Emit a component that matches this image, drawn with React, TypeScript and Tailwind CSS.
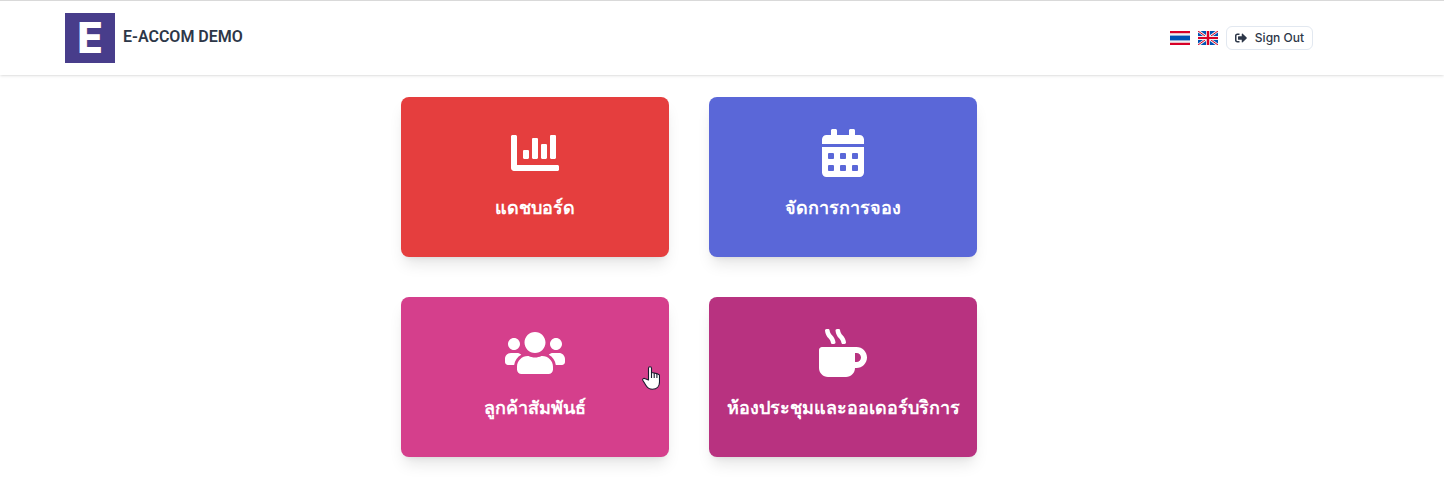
import type { ReactNode } from "react";
import { FaCalendarAlt, FaChartBar, FaMugHot, FaSignOutAlt, FaUsers } from "react-icons/fa";

type Tile = { label: string; color: string; icon: ReactNode };

const tiles: Tile[] = [
  { label: "แดชบอร์ด", color: "bg-[#e53e3e]", icon: <FaChartBar className="h-12 w-12" aria-hidden /> },
  { label: "จัดการการจอง", color: "bg-[#5a67d8]", icon: <FaCalendarAlt className="h-12 w-12" aria-hidden /> },
  { label: "ลูกค้าสัมพันธ์", color: "bg-[#d53f8c]", icon: <FaUsers className="h-12 w-15" aria-hidden /> },
  { label: "ห้องประชุมและออเดอร์บริการ", color: "bg-[#b83280]", icon: <FaMugHot className="h-12 w-12" aria-hidden /> },
];

function ThaiFlag() {
  return (
    <svg viewBox="0 0 20 14" className="h-3.5 w-5" aria-hidden>
      <path fill="#d80027" d="M0 0h20v14H0z" />
      <path fill="#f0f0f0" d="M0 2.200h20v9.600H0z" />
      <path fill="#0052b4" d="M0 4.600h20v4.800H0z" />
    </svg>
  );
}

function BritishFlag() {
  return (
    <svg viewBox="0 0 20 14" className="h-3.5 w-5" aria-hidden>
      <path fill="#f0f0f0" d="M0 0h20v14H0z" />
      <path fill="#0052b4" d="M2.500 0H8v4zM12 0h5.500L12 4zM20 1.500V5h-5zM20 9v3.500L15 9zM17.500 14H12v-4zM8 14H2.500L8 10zM0 12.500V9h5zM0 5V1.500L5 5z" />
      <path stroke="#d80027" strokeWidth="1" d="M0 0l7 5M20 0l-7 5M0 14l7-5M20 14l-7-5" />
      <path fill="#f0f0f0" d="M8 0h4v14H8zM0 5h20v4H0z" />
      <path fill="#d80027" d="M8.800 0h2.400v14H8.800zM0 5.900h20v2.200H0z" />
    </svg>
  );
}

function Pointer() {
  return (
    <svg viewBox="0 0 18 24" className="pointer-events-none absolute right-[9px] bottom-[67px] h-6 w-[18px]" aria-hidden>
      <path
        d="M6.500 14V2.200C6.500.2 9.500.2 9.500 2.200V6.500l2.700.5 2.600.6 1.900.8c.5.3.8.8.8 1.400V16c0 4-2.500 7.300-7 7.300-3 0-5-1.300-6.500-3.800L.9 14.500c-.9-1.700 1-2.800 2.400-1.700z"
        fill="#fff"
        stroke="#1a1a2e"
        strokeWidth="1.100"
        strokeLinejoin="round"
      />
      <path d="M9.500 6v6M12.200 7v5M14.900 7.800V12" stroke="#1a1a2e" strokeWidth="1.100" />
    </svg>
  );
}

export default function App() {
  return (
    <div className="bg-white font-['Inter','Noto_Sans',sans-serif] text-[#2d3748]">
      <header className="border-t border-[#d9d9d9] bg-white pr-[66px] shadow">
        <div className="mx-auto flex max-w-7xl items-center justify-between px-4 py-3">
          <a href="#" className="flex items-center gap-2">
            <span className="flex size-[50px] items-center justify-center bg-[#483d8b] text-[42px] leading-none font-extrabold text-white">
              E
            </span>
            <span className="pb-0.5 font-['Roboto',sans-serif] text-base font-semibold">E-ACCOM DEMO</span>
          </a>
          <div className="flex items-center gap-2">
            <button type="button" aria-label="ไทย"><ThaiFlag /></button>
            <button type="button" aria-label="English"><BritishFlag /></button>
            <button
              type="button"
              className="flex items-center gap-2 rounded-md border border-[#e2e8f0] px-2 py-[3px] text-xs font-medium"
            >
              <FaSignOutAlt aria-hidden />
              Sign Out
            </button>
          </div>
        </div>
      </header>
      <main className="pr-[66px] pb-7">
        <div className="mx-auto grid max-w-xl grid-cols-2 gap-10 pt-[22px]">
          {tiles.map((tile, index) => (
            <a
              key={tile.label}
              href="#"
              className={`relative flex h-40 flex-col items-center gap-4 rounded-lg pt-8 text-[18px] leading-[30px] font-bold whitespace-nowrap text-white shadow-lg ${tile.color}`}
            >
              {tile.icon}
              {tile.label}
              {index === 2 && <Pointer />}
            </a>
          ))}
        </div>
      </main>
    </div>
  );
}
